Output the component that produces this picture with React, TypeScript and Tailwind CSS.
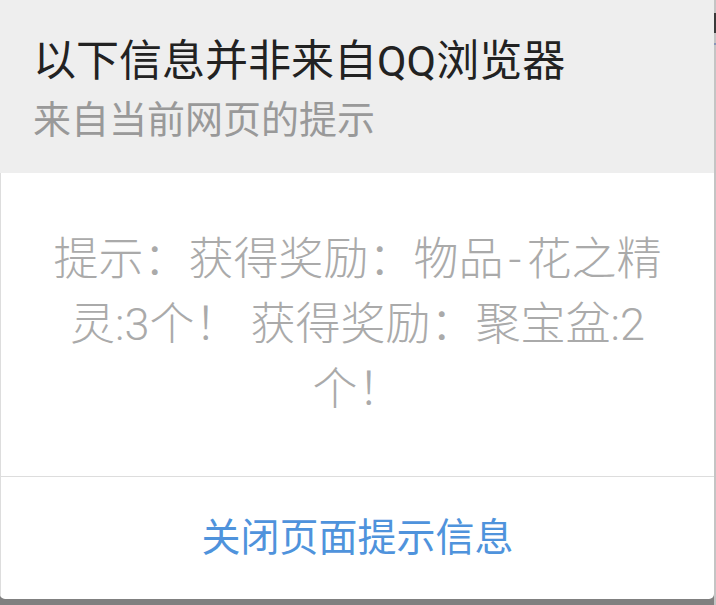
import React from "react";

const FONT = { fontFamily: 'Roboto, "Noto Sans CJK SC", "Noto Sans", sans-serif' };

export default function App() {
  return (
    <div className="w-[716px] h-[605px] bg-[#808080] flex overflow-hidden" style={FONT}>
      <div className="w-[714px] h-[599px] bg-white rounded-b-[5px] flex flex-col overflow-hidden">
        <div className="h-[173px] bg-[#eeeeee] pl-[33px] pt-[33px] flex flex-col">
          <div className="text-[43px] leading-[56px] text-[#222222]">以下信息并非来自QQ浏览器</div>
          <div className="text-[38px] leading-[50px] mt-[6px] text-[#999999]">来自当前网页的提示</div>
        </div>
        <div className="flex-1 flex items-center justify-center px-[48px] border-l border-[#dddddd]">
          <div className="text-[45px] leading-[65px] font-light text-[#aaaaaa] text-center">
            提示：获得奖励：物品<span className="px-[5px]">-</span>花之精灵:3个！ 获得奖励：聚宝盆:2个！
          </div>
        </div>
        <div className="h-[123px] border-t border-l border-[#dddddd] flex items-center justify-center">
          <span className="text-[39px] leading-[50px] text-[#4f93dc]">关闭页面提示信息</span>
        </div>
      </div>
      <div className="flex-1 bg-[#c4c4c4] flex flex-col">
        <div className="h-[13px]" />
        <div className="h-[20px] bg-[#3a3a3a]" />
        <div className="h-[10px]" />
        <div className="h-[2px] bg-[#8a96b8]" />
      </div>
    </div>
  );
}
